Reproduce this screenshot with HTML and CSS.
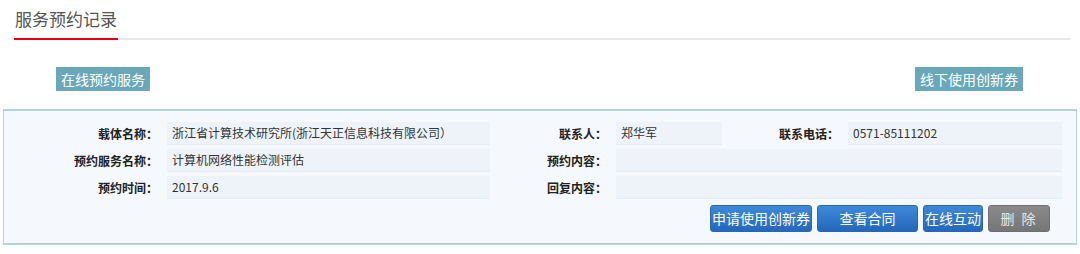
FILE: index.html
```html
<!DOCTYPE html>
<html lang="zh-CN">
  <head>
    <meta charset="UTF-8" />
    <title>服务预约记录</title>
    <link rel="stylesheet" href="styles.css">
  </head>
  <body>
    <!-- title -->
    <div class="title-bar">
      <h2 class="title">服务预约记录</h2>
    </div>

    <!-- top actions -->
    <div class="top-actions">
      <a class="tag-btn">在线预约服务</a>
      <a class="tag-btn">线下使用创新券</a>
    </div>

    <!-- record -->
    <div class="record">
      <div class="record-grid">
        <div class="label">载体名称：</div>
        <div class="value">浙江省计算技术研究所(浙江天正信息科技有限公司）</div>
        <div class="label">联系人：</div>
        <div class="value">郑华军</div>
        <div class="label">联系电话：</div>
        <div class="value">0571-85111202</div>

        <div class="label">预约服务名称：</div>
        <div class="value">计算机网络性能检测评估</div>
        <div class="label">预约内容：</div>
        <div class="value wide"></div>

        <div class="label">预约时间：</div>
        <div class="value">2017.9.6</div>
        <div class="label">回复内容：</div>
        <div class="value wide"></div>
      </div>
      <div class="record-actions">
        <button class="btn">申请使用创新券</button>
        <button class="btn btn-fixed">查看合同</button>
        <button class="btn">在线互动</button>
        <button class="btn btn-grey">删&nbsp;除</button>
      </div>
    </div>
  </body>
</html>
```

FILE: styles.css
```css
body {
  margin: 0;
  font-family: "Noto Sans CJK SC", "Liberation Sans", sans-serif;
  font-size: 12px;
  color: #333;
  background: #fff;
}

.title-bar {
  margin: 0 10px 0 14px;
  border-bottom: 2px solid #e8e8e8;
  height: 38px;
}

.title {
  display: inline-block;
  margin: 0;
  padding: 7px 1px 0;
  height: 31px;
  font-size: 17px;
  font-weight: normal;
  color: #555;
  line-height: 24px;
  border-bottom: 2px solid #e60012;
  box-sizing: content-box;
}

.top-actions {
  display: flex;
  justify-content: space-between;
  padding: 27px 57px 0 56px;
}

.tag-btn {
  display: inline-block;
  height: 24px;
  line-height: 24px;
  padding: 0 5px;
  background: #68a8ba;
  color: #fff;
  font-size: 14px;
}

.record {
  margin: 18px 3px 0 3px;
  border: 1px solid #b5d3de;
  border-width: 2px 1px;
  background: #f5f9fd;
  padding: 11px 0 11px;
}

.record-grid {
  display: grid;
  grid-template-columns: 163px 323px 126px 106px 126px 214px;
  row-gap: 4px;
}

.label {
  text-align: right;
  padding-right: 9px;
  font-weight: bold;
  line-height: 23px;
  color: #222;
}

.value {
  background: #edf3f9;
  border-bottom: 1px solid #e2ecf5;
  line-height: 22px;
  padding-left: 5px;
  color: #333;
}

.value.wide {
  grid-column: 4 / 7;
}

.record-actions {
  display: flex;
  justify-content: flex-end;
  gap: 5px;
  padding: 6px 26px 0 0;
}

.btn {
  height: 27px;
  padding: 0 1px;
  border: 1px solid #2a66ad;
  border-radius: 3px;
  background: linear-gradient(#3d8ad9, #2467bc);
  color: #fff;
  font-family: "Noto Sans CJK SC", sans-serif;
  font-size: 14px;
  line-height: 25px;
}

.btn-fixed {
  width: 101px;
}

.btn-grey {
  width: 62px;
  border-color: #6f6f6f;
  background: linear-gradient(#8a8a8a, #767676);
  color: #e8e8e8;
  letter-spacing: 2px;
}
```
